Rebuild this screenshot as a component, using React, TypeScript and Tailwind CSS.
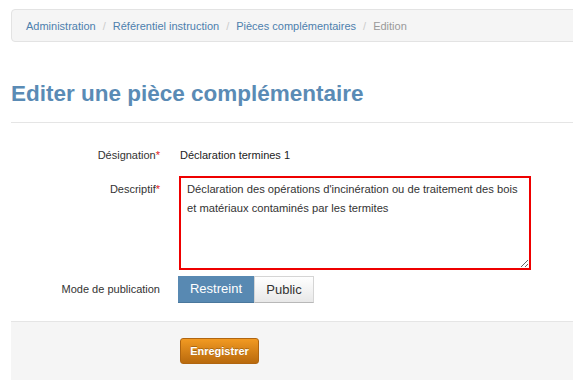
import React from 'react';

const crumbs = ['Administration', 'Référentiel instruction', 'Pièces complémentaires'];

export default function App() {
  return (
    <div className="w-[573px] h-[392px] overflow-hidden bg-white font-['Liberation_Sans',Arial,sans-serif] text-[#333]">
      <div className="w-[640px] pl-[11px] pt-[9px]">
        {/* Breadcrumb */}
        <div className="h-[33px] flex items-center pl-[14px] pt-[1px] bg-[#f5f5f5] border border-[#e3e3e3] rounded-[4px] text-[11px]">
          {crumbs.map((c) => (
            <span key={c} className="flex items-center">
              <span className="text-[#4d80ad]">{c}</span>
              <span className="text-[#ccc] px-[7px]">/</span>
            </span>
          ))}
          <span className="text-[#999]">Edition</span>
        </div>

        {/* Title */}
        <h1 className="mt-[39px] text-[22.5px] leading-[26px] font-bold text-[#5a8bb5] pb-[15px] border-b border-[#e5e5e5]">
          Editer une pièce complémentaire
        </h1>

        {/* Form */}
        <div className="mt-[24px] flex items-center text-[11px] leading-[16px]">
          <div className="w-[149px] text-right">
            Désignation<span className="text-[#e02020]">*</span>
          </div>
          <div className="ml-[20px] text-[#222]">Déclaration termines 1</div>
        </div>

        <div className="mt-[13px] flex items-start text-[11px] leading-[16px]">
          <div className="w-[149px] text-right pt-[5px]">
            Descriptif<span className="text-[#e02020]">*</span>
          </div>
          <textarea
            readOnly
            defaultValue="Déclaration des opérations d'incinération ou de traitement des bois et matériaux contaminés par les termites"
            className="ml-[19px] w-[352px] h-[94px] border-2 border-[#ee0000] px-[6px] pt-[2px] text-[11.2px] leading-[19px] text-[#333] outline-none bg-white"
          />
        </div>

        <div className="mt-[6px] flex items-center text-[11px]">
          <div className="w-[149px] text-right">Mode de publication</div>
          <div className="ml-[18px] flex h-[27px] text-[13px]">
            <span className="w-[76px] flex items-center justify-center bg-[#5889b2] text-white border-b border-[#4a779c]">
              Restreint
            </span>
            <span className="w-[60px] flex items-center justify-center bg-gradient-to-b from-white to-[#e8e8e8] border border-[#d5d5d5] border-b-[#b8b8b8] text-[#333]">
              Public
            </span>
          </div>
        </div>

        {/* Actions */}
        <div className="mt-[18px] bg-[#f5f5f5] border-t border-[#e5e5e5] pt-[16px] pb-[16px] pl-[169px]">
          <button className="w-[79px] h-[26px] rounded-[3px] bg-gradient-to-b from-[#f29a22] to-[#b96a0d] border border-[#b06510] text-white text-[11px] font-bold [text-shadow:0_-1px_0_rgba(0,0,0,0.25)]">
            Enregistrer
          </button>
        </div>
      </div>
    </div>
  );
}
